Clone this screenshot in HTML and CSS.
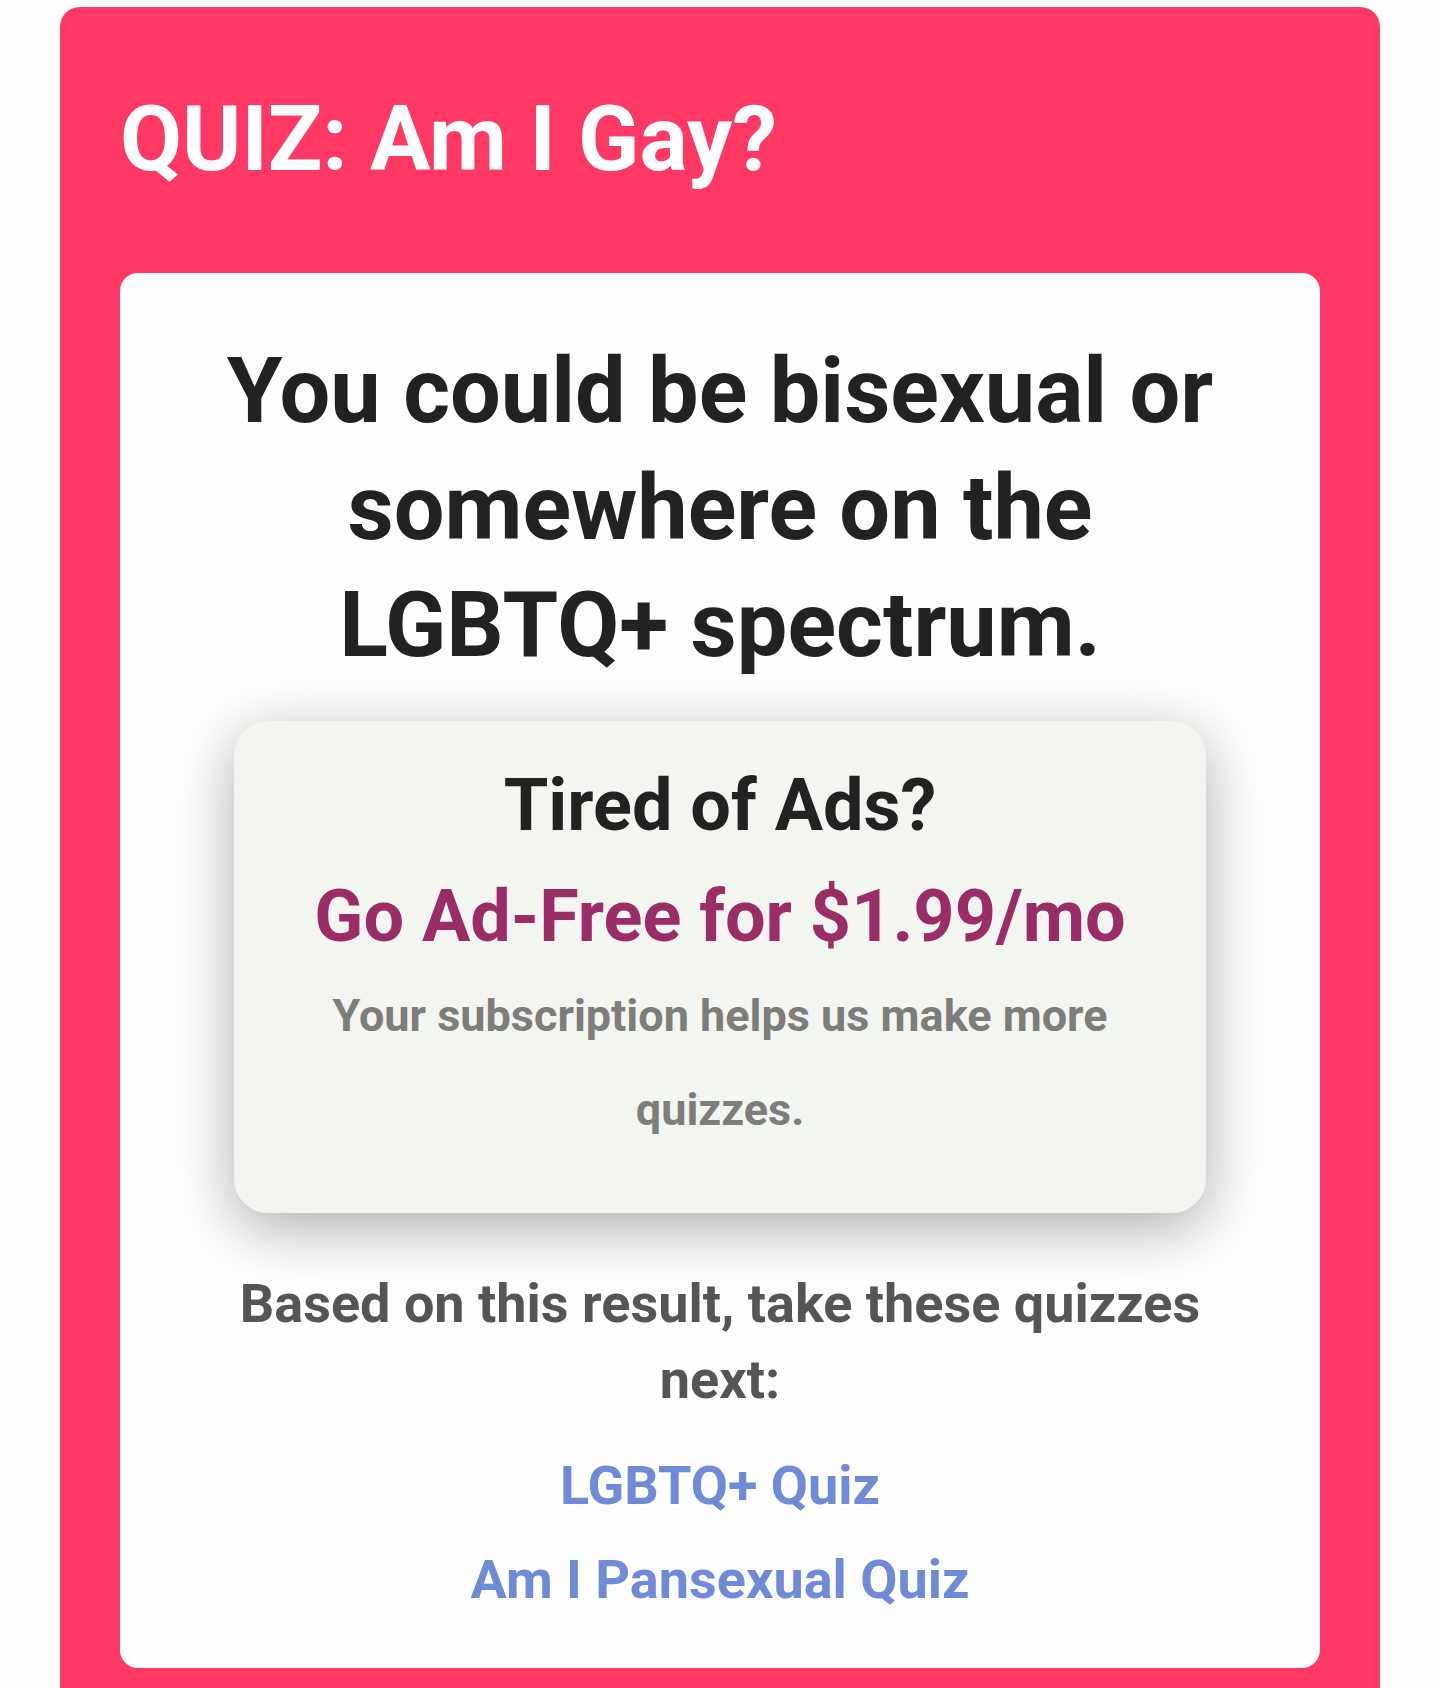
FILE: index.html
```html
<!DOCTYPE html>
<html lang="en">
<head>
  <meta charset="utf-8">
  <meta name="viewport" content="width=device-width, initial-scale=1">
  <title>QUIZ: Am I Gay?</title>
  <link rel="stylesheet" href="styles.css">
</head>
<body>
  <main class="quiz">
    <h1 class="quiz-title">QUIZ: Am I Gay?</h1>
    <section class="panel">
      <h2 class="result">You could be bisexual or somewhere on the LGBTQ+ spectrum.</h2>
      <aside class="promo">
        <h3 class="promo-title">Tired of Ads?</h3>
        <a class="promo-link" href="#subscribe">Go Ad-Free for $1.99/mo</a>
        <p class="promo-note">Your subscription helps us make more quizzes.</p>
      </aside>
      <p class="next-intro">Based on this result, take these quizzes next:</p>
      <nav class="next-list" aria-label="Suggested quizzes">
        <a class="next-link" href="#lgbtq-quiz">LGBTQ+ Quiz</a>
        <a class="next-link" href="#pansexual-quiz">Am I Pansexual Quiz</a>
      </nav>
    </section>
  </main>
</body>
</html>
```
FILE: styles.css
```css
* {
  box-sizing: border-box;
}

body {
  margin: 0;
  padding: 7px 60px 0;
  background: #fefefe;
  font-family: Roboto, "Liberation Sans", sans-serif;
  font-weight: 700;
}

h1,
h2,
h3,
p {
  margin: 0;
  font-weight: inherit;
}

a {
  text-decoration: none;
}

.quiz {
  padding: 0 60px 21px;
  border-radius: 20px 20px 0 0;
  background: #ff3963;
}

.quiz-title {
  padding: 74px 0 75px;
  color: #fff;
  font-size: 90px;
  line-height: 117px;
}

.panel {
  display: flex;
  flex-direction: column;
  padding: 60px 60px 41px;
  border-radius: 18px;
  background: #fefefe;
  text-align: center;
}

.result {
  color: #222;
  font-size: 90px;
  line-height: 117px;
}

.promo {
  display: flex;
  flex-direction: column;
  margin: 37px 54px 0;
  padding: 32px 60px 56px;
  border-radius: 34px;
  background: #f3f5f0;
  box-shadow: 0 15px 60px rgba(0, 0, 0, 0.32);
}

.promo-title,
.promo-link {
  font-size: 72px;
  line-height: 105px;
}

.promo-title {
  margin-bottom: 6px;
  color: #222;
}

.promo-link {
  color: #9b2d66;
}

.promo-note {
  color: #7d7d7a;
  font-size: 45px;
  line-height: 94px;
}

.next-intro {
  margin: 53px 0 21px;
  padding: 0 50px;
  color: #555;
  font-size: 54px;
  line-height: 76px;
}

.next-list {
  display: flex;
  flex-direction: column;
  align-items: center;
}

.next-link {
  color: #6f8bd8;
  font-size: 54px;
  line-height: 94px;
}
```
